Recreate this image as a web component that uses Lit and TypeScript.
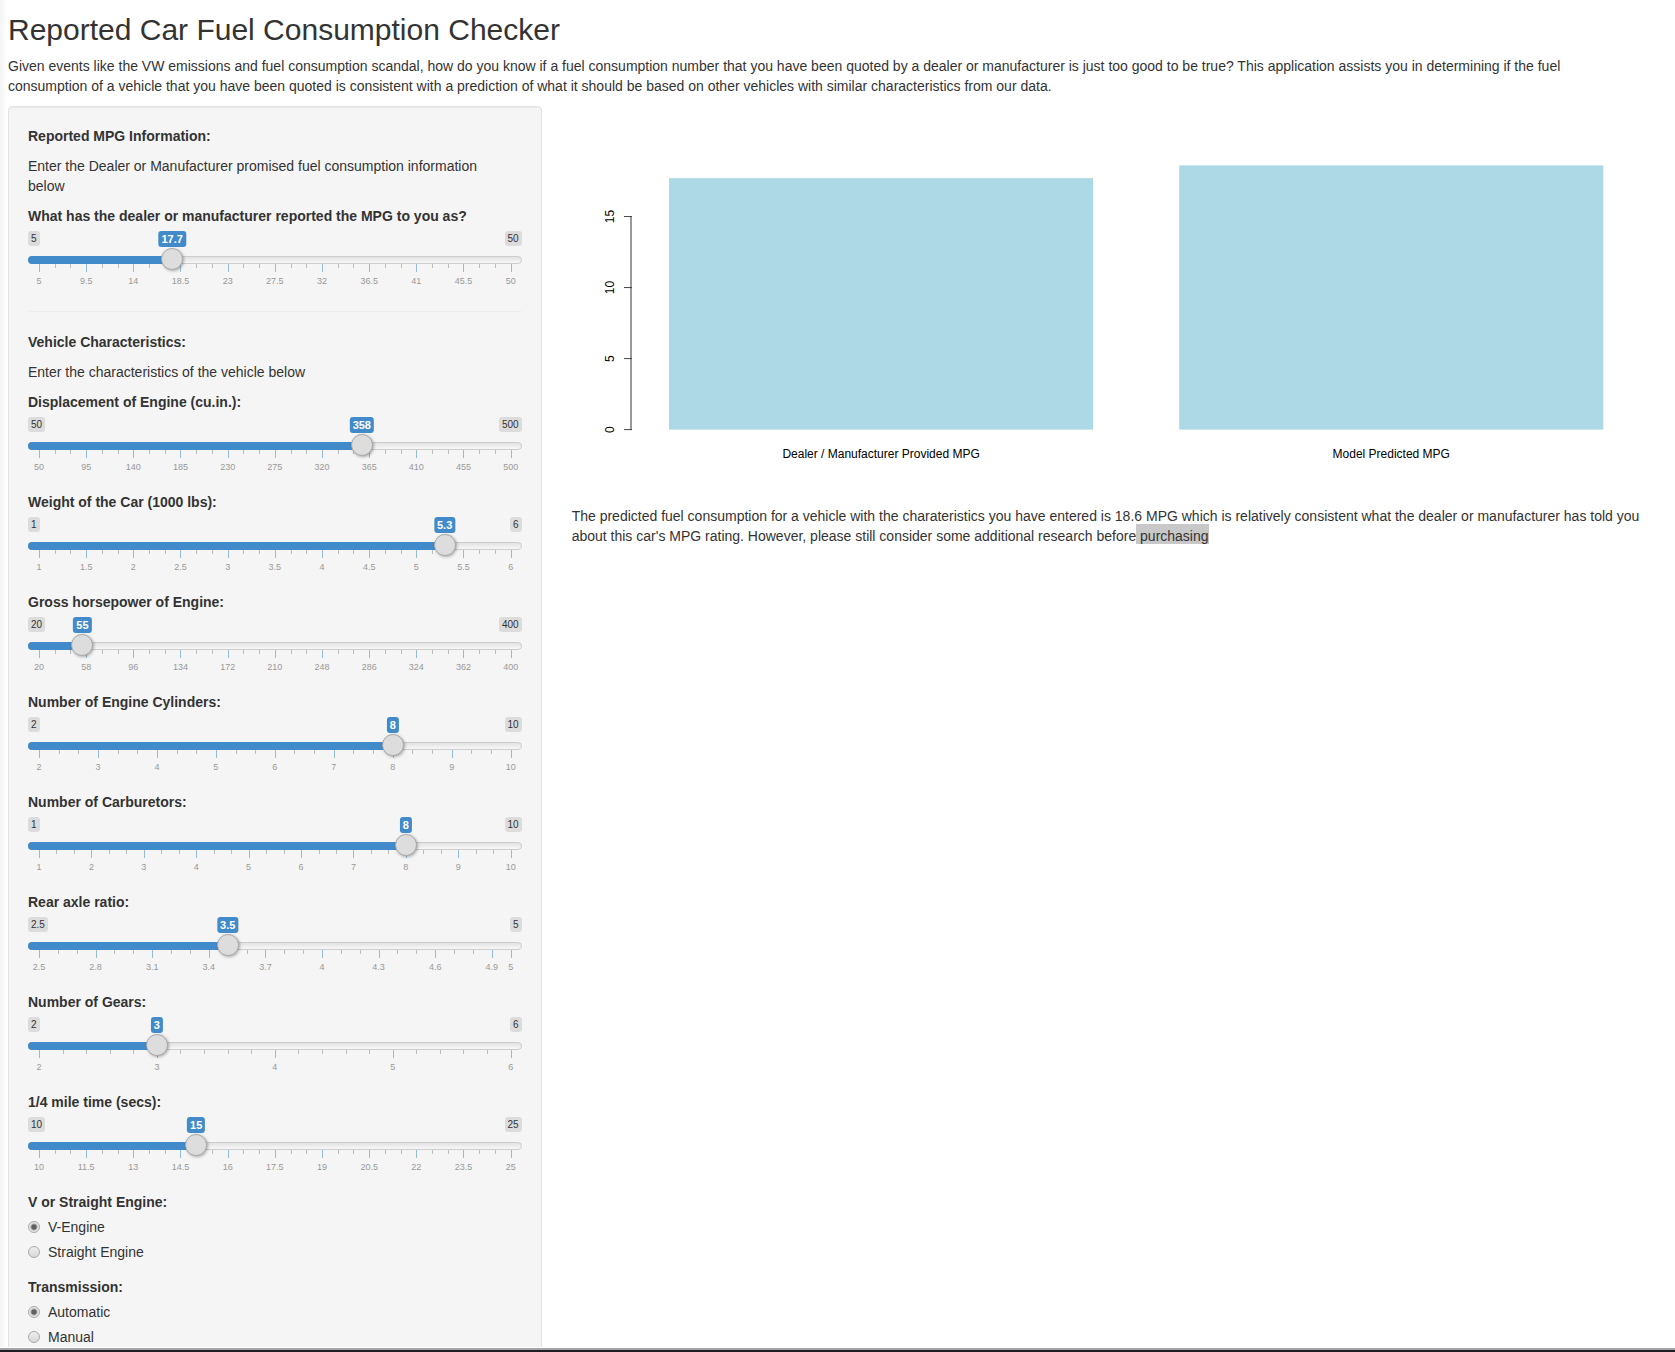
import { LitElement, html, svg, css } from "lit";
import { customElement, property, state } from "lit/decorators.js";
import { styleMap } from "lit/directives/style-map.js";

interface SliderSpec {
  id: string;
  label: string;
  min: number;
  max: number;
  value: number;
  step: number;
  /** Values that carry a long tick and a number. */
  marks: number[];
  /** How many parts the short ticks cut each stretch into. */
  parts: number;
}

const range = (from: number, step: number, count: number): number[] =>
  Array.from({ length: count }, (_, i) => Number((from + i * step).toFixed(2)));

const REPORTED: SliderSpec = {
  id: "mpg",
  label: "What has the dealer or manufacturer reported the MPG to you as?",
  min: 5,
  max: 50,
  value: 17.7,
  step: 0.1,
  marks: range(5, 4.5, 11),
  parts: 3,
};

const VEHICLE: SliderSpec[] = [
  { id: "disp", label: "Displacement of Engine (cu.in.):", min: 50, max: 500, value: 358, step: 1, marks: range(50, 45, 11), parts: 3 },
  { id: "wt", label: "Weight of the Car (1000 lbs):", min: 1, max: 6, value: 5.3, step: 0.1, marks: range(1, 0.5, 11), parts: 3 },
  { id: "hp", label: "Gross horsepower of Engine:", min: 20, max: 400, value: 55, step: 1, marks: range(20, 38, 11), parts: 3 },
  { id: "cyl", label: "Number of Engine Cylinders:", min: 2, max: 10, value: 8, step: 1, marks: range(2, 1, 9), parts: 3 },
  { id: "carb", label: "Number of Carburetors:", min: 1, max: 10, value: 8, step: 1, marks: range(1, 1, 10), parts: 3 },
  { id: "drat", label: "Rear axle ratio:", min: 2.5, max: 5, value: 3.5, step: 0.1, marks: [...range(2.5, 0.3, 9), 5], parts: 3 },
  { id: "gear", label: "Number of Gears:", min: 2, max: 6, value: 3, step: 1, marks: range(2, 1, 5), parts: 5 },
  { id: "qsec", label: "1/4 mile time (secs):", min: 10, max: 25, value: 15, step: 0.1, marks: range(10, 1.5, 11), parts: 3 },
];

@customElement("range-slider")
export class RangeSlider extends LitElement {
  @property({ attribute: false }) spec!: SliderSpec;
  @state() private current?: number;

  static styles = css`
    :host {
      display: block;
      margin-bottom: 15px;
    }
    .label {
      display: block;
      margin-bottom: 5px;
      font-weight: bold;
    }
    .badges {
      position: relative;
      display: flex;
      justify-content: space-between;
      align-items: flex-start;
      height: 17px;
    }
    .bound {
      padding: 1px 3px;
      border-radius: 3px;
      background: #dcdcdc;
      color: #333;
      font-size: 10px;
      line-height: 13px;
    }
    .value {
      position: absolute;
      top: 0;
      left: var(--at);
      padding: 1px 3px;
      border-radius: 3px;
      background: #428bca;
      color: #fff;
      font-size: 11px;
      font-weight: bold;
      line-height: 14px;
      transform: translateX(-50%);
    }
    .rail {
      position: relative;
      z-index: 1;
      display: grid;
      height: 22px;
    }
    .track,
    .fill,
    .input {
      grid-area: 1 / 1;
      box-sizing: border-box;
    }
    .track,
    .fill {
      height: 8px;
      margin-top: 8px;
    }
    .track {
      border: 1px solid #ccc;
      border-radius: 5px;
      background: linear-gradient(to bottom, #e2e2e2, #f8f8f8);
    }
    .fill {
      width: var(--at);
      border-radius: 5px 0 0 5px;
      background: #428bca;
    }
    .input {
      appearance: none;
      -webkit-appearance: none;
      width: 100%;
      height: 22px;
      margin: 0;
      background: transparent;
    }
    .input::-webkit-slider-runnable-track {
      height: 22px;
    }
    .input::-webkit-slider-thumb {
      appearance: none;
      -webkit-appearance: none;
      box-sizing: border-box;
      width: 22px;
      height: 22px;
      border: 1px solid #aaa;
      border-radius: 50%;
      background: #ddd;
      box-shadow: 1px 1px 3px rgba(0, 0, 0, 0.3);
      cursor: pointer;
    }
    .scale {
      margin: -6px 11px 0;
    }
    .scale svg {
      display: block;
      width: 100%;
      height: 27px;
      overflow: visible;
    }
    .tick {
      fill: #bbb;
      shape-rendering: crispEdges;
    }
    .tick.long {
      fill: #96bcdd;
    }
    .number {
      fill: #999;
      font-size: 9px;
      text-anchor: middle;
    }
  `;

  private share(value: number): number {
    return (value - this.spec.min) / (this.spec.max - this.spec.min);
  }

  private renderTicks() {
    const { marks, parts } = this.spec;
    const stretch = marks[1] - marks[0];
    return marks.map((mark, i) => {
      const next = marks[i + 1];
      const whole = next !== undefined && next - mark > stretch * 0.9;
      const between = whole
        ? range(1, 1, parts - 1).map((n) => mark + ((next - mark) * n) / parts)
        : [];
      const x = `${this.share(mark) * 100}%`;
      return svg`
        <rect class="tick long" x=${x} y="0" width="1" height="8"></rect>
        ${between.map((v) => svg`<rect class="tick" x=${`${this.share(v) * 100}%`} y="0" width="1" height="4"></rect>`)}
        <text class="number" x=${x} y="20">${mark}</text>
      `;
    });
  }

  render() {
    const { id, label, min, max, step } = this.spec;
    const value = this.current ?? this.spec.value;
    const at = `calc(11px + (100% - 22px) * ${this.share(value)})`;
    return html`
      <div style=${styleMap({ "--at": at })}>
        <label class="label" for=${id}>${label}</label>
        <div class="badges">
          <span class="bound">${min}</span>
          <span class="bound">${max}</span>
          <output class="value" for=${id}>${value}</output>
        </div>
        <div class="rail">
          <div class="track"></div>
          <div class="fill"></div>
          <input
            class="input"
            id=${id}
            type="range"
            min=${min}
            max=${max}
            step=${step}
            .value=${String(value)}
            @input=${(e: Event) => (this.current = Number((e.target as HTMLInputElement).value))}
          />
        </div>
        <div class="scale"><svg aria-hidden="true">${this.renderTicks()}</svg></div>
      </div>
    `;
  }
}

@customElement("radio-group")
export class RadioGroup extends LitElement {
  @property() name = "";
  @property() legend = "";
  @property({ attribute: false }) options: string[] = [];

  static styles = css`
    .group {
      margin: 0 0 15px;
      padding: 0;
      border: 0;
      min-width: 0;
    }
    .legend {
      padding: 0;
      font-weight: bold;
    }
    .option {
      display: flex;
      align-items: center;
      gap: 8px;
      margin-top: 5px;
    }
    .radio {
      appearance: none;
      -webkit-appearance: none;
      box-sizing: border-box;
      width: 12px;
      height: 12px;
      margin: 0;
      border: 1px solid #aaa;
      border-radius: 50%;
      background: linear-gradient(to bottom, #eee, #d8d8d8);
    }
    .radio:checked {
      background: radial-gradient(circle, #606060 0 2px, #e6e6e6 4px);
    }
  `;

  render() {
    return html`
      <fieldset class="group">
        <legend class="legend">${this.legend}</legend>
        ${this.options.map(
          (option, i) => html`
            <label class="option">
              <input class="radio" type="radio" name=${this.name} value=${option} ?checked=${i === 0} />
              <span>${option}</span>
            </label>
          `,
        )}
      </fieldset>
    `;
  }
}

@customElement("mpg-chart")
export class MpgChart extends LitElement {
  static styles = css`
    :host {
      display: block;
    }
    .plot {
      display: block;
      width: 100%;
      height: auto;
    }
    .bar {
      fill: #add8e6;
    }
    .tick {
      stroke: #444;
    }
    .axis {
      stroke: #999;
      stroke-width: 2px;
    }
    .text {
      fill: #000;
      font-size: 12px;
      text-anchor: middle;
    }
  `;

  private readonly bars = [
    { label: "Dealer / Manufacturer Provided MPG", value: 17.7, x: 97 },
    { label: "Model Predicted MPG", value: 18.6, x: 607 },
  ];

  render() {
    const base = 323.5;
    const unit = 14.2;
    return html`
      <svg class="plot" viewBox="0 0 1097 400" role="img" aria-label="Provided and predicted MPG">
        ${this.bars.map(
          (bar) => svg`
            <rect class="bar" x=${bar.x} y=${base - bar.value * unit} width="424" height=${bar.value * unit}></rect>
            <text class="text" x=${bar.x + 212} y="352">${bar.label}</text>
          `,
        )}
        <line class="axis" x1="59" x2="59" y1="110" y2="324"></line>
        ${[0, 5, 10, 15].map((v) => {
          const y = base - v * unit;
          return svg`
            <line class="tick" x1="52" x2="60" y1=${y} y2=${y}></line>
            <text class="text" transform=${`translate(42 ${y}) rotate(-90)`}>${v}</text>
          `;
        })}
      </svg>
    `;
  }
}

@customElement("app-root")
export class AppRoot extends LitElement {
  static styles = css`
    :host {
      display: flex;
      flex-direction: column;
      height: 100vh;
      background: #fff;
      color: #333;
      font-family: "Liberation Sans", Arial, sans-serif;
      font-size: 14px;
      line-height: 20px;
    }
    .page {
      flex: 1;
      min-height: 0;
      box-sizing: border-box;
      padding: 13px 6px 0 8px;
      overflow-y: auto;
      scrollbar-width: none;
      background: linear-gradient(to right, #f4f4f4, #fff 7px);
    }
    .title {
      margin: 0 0 10px;
      font-size: 30px;
      font-weight: normal;
      line-height: 33px;
    }
    .text {
      margin: 0 0 10px;
    }
    .intro,
    .hint {
      max-width: 96%;
    }
    .columns {
      display: grid;
      grid-template-columns: calc(100% / 3 - 20px) 1fr;
      align-items: start;
      gap: 30px;
    }
    .panel {
      box-sizing: border-box;
      min-width: 0;
      margin-bottom: 20px;
      padding: 19px;
      border: 1px solid #e3e3e3;
      border-radius: 4px;
      background: #f5f5f5;
      box-shadow: inset 0 1px 1px rgba(0, 0, 0, 0.05);
    }
    .heading {
      margin: 0 0 10px;
      font-size: 14px;
      line-height: 20px;
    }
    .rule {
      margin: 20px 0;
      border: 0;
      border-top: 1px solid #eee;
    }
    .marked {
      background: #c8c8c8;
      box-shadow: 0 -4px 0 #c8c8c8;
      color: inherit;
    }
    .edge {
      height: 2px;
      margin-top: 1px;
      border-top: 2px solid #a5a5a8;
      background: #1e1e24;
    }
  `;

  render() {
    return html`
      <div class="page">
        <h1 class="title">Reported Car Fuel Consumption Checker</h1>
        <p class="text intro">
          Given events like the VW emissions and fuel consumption scandal, how do you know if a fuel consumption number
          that you have been quoted by a dealer or manufacturer is just too good to be true? This application assists you
          in determining if the fuel consumption of a vehicle that you have been quoted is consistent with a prediction of
          what it should be based on other vehicles with similar characteristics from our data.
        </p>
        <div class="columns">
          <form class="panel">
            <h2 class="heading">Reported MPG Information:</h2>
            <p class="text hint">Enter the Dealer or Manufacturer promised fuel consumption information below</p>
            <range-slider .spec=${REPORTED}></range-slider>
            <hr class="rule" />
            <h2 class="heading">Vehicle Characteristics:</h2>
            <p class="text hint">Enter the characteristics of the vehicle below</p>
            ${VEHICLE.map((spec) => html`<range-slider .spec=${spec}></range-slider>`)}
            <radio-group name="vs" legend="V or Straight Engine:" .options=${["V-Engine", "Straight Engine"]}></radio-group>
            <radio-group name="am" legend="Transmission:" .options=${["Automatic", "Manual"]}></radio-group>
          </form>
          <main>
            <mpg-chart></mpg-chart>
            <p class="text">
              The predicted fuel consumption for a vehicle with the charateristics you have entered is 18.6 MPG which is
              relatively consistent what the dealer or manufacturer has told you about this car's MPG rating. However,
              please still consider some additional research before<mark class="marked"> purchasing</mark>
            </p>
          </main>
        </div>
      </div>
      <div class="edge"></div>
    `;
  }
}
